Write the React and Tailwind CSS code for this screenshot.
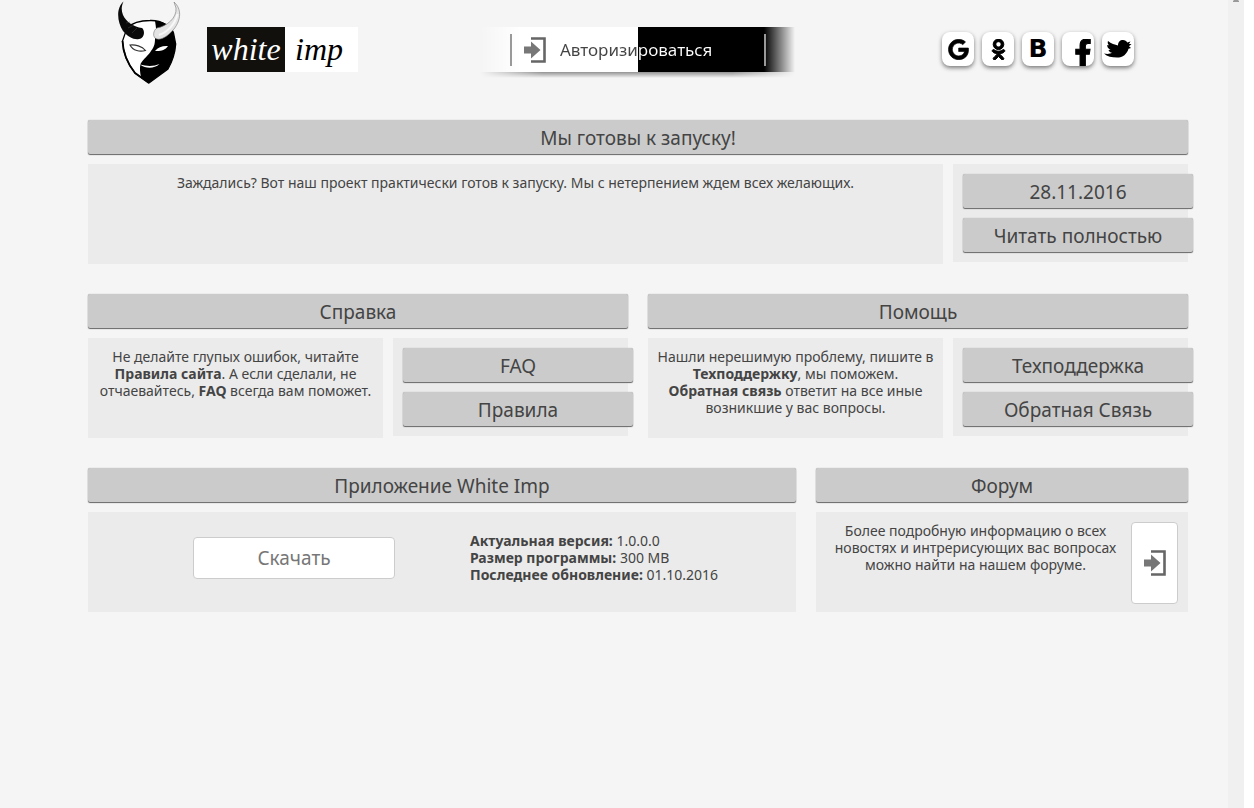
import { FaGoogle, FaOdnoklassniki, FaFacebookF } from "react-icons/fa";

function ImpMask() {
  return (
    <svg viewBox="0 0 64 84" className="h-[84px] w-16" role="img" aria-label="White Imp">
      <path d="M10 28 C16 22 25 20.500 33 20.500 C46 20 55 28 56.500 33 L58.700 44 C58 54 55 62 51 69 L32 83 L18 73 C10 63 6 52 5.500 41Z" fill="#fff" stroke="#000" strokeWidth="1.300" />
      <path d="M38 21 C49 21 55 28 56.500 33 L58.700 44 C58 54 55 62 51 69 L32 83 L24 77 C23 73 22.500 68 23.500 64 C26 59 32 55 34 51 C38 46 38 42 38 38 C40 33 39 27 38 21Z" fill="#000" />
      <path d="M5.500 41 C6 52 10 63 18 73 L32 83" fill="none" stroke="#000" strokeWidth="1.800" />
      <path d="M6.500 1.500 C-1 8 0 22 6 31 C11 37 17 40 22 39 C28 38 28 30 25 28 C17 27 9 22 6 15 C4 10 4.500 6 6.500 1.500Z" fill="#0a0a0a" />
      <path d="M9 23 L13 22 M11 28 L17 25 M15 33 L20 28" stroke="#444" strokeWidth="0.500" />
      <path d="M57 2 C65 9 64 20 57 29 C51 36 45 40 40 39 C35 38 36 30 40 28 C50 26 60 18 59 8Z" fill="#e4e4e4" stroke="#777" strokeWidth="0.600" />
      <path d="M42 35 C51 32 58 24 60.500 14" fill="none" stroke="#f8f8f8" strokeWidth="2" />
      <path d="M13 45 C18 44.500 25 46 28.500 50.500 C23 52 16 51 13 45Z" fill="#fff" stroke="#333" strokeWidth="1.100" />
      <path d="M38 51 C41 47 46 45.500 51 46 C48 50.500 43 51.500 38 51Z" fill="#fff" />
      <path d="M23 64.500 C30 66.500 37 66.500 42.500 64 C37 69 29 69 23 64.500Z" fill="#fff" />
    </svg>
  );
}

function EnterIcon() {
  return (
    <svg viewBox="0 0 22 26" className="h-[26px] w-[22px] shrink-0" aria-hidden="true">
      <path d="M7 1.500 H20.500 V24.500 H7" fill="none" stroke="#666" strokeWidth="2.600" />
      <path d="M0 9.500 H7 V4.500 L16.500 13 L7 21.500 V16.500 H0Z" fill="#777" />
    </svg>
  );
}

function BirdIcon() {
  return (
    <svg viewBox="0 0 28 18" className="h-[18px] w-7 shrink-0" aria-hidden="true">
      <path d="M0 13.500 C3 14.200 6 14 8 12.800 C6 12.500 5 11.500 4.500 10 L6.500 9.800 C4 8.500 3.200 7 3.200 5 L5 5.300 C3.500 4 3.500 2.500 4 1 C7 4 11 4.500 14 5.500 C14 2 16 0 19 0 C21 0 22.500 1 23.300 2.500 L26.500 1.500 L25 4 L27.500 4 L25 6.300 L27 8 L24.500 8.700 C23 14 19 17.500 13 17.500 C8 17.500 3 16.500 0 13.500Z" fill="#000" />
    </svg>
  );
}

const plate =
  "bg-[#cbcbcb] rounded-xs shadow-[0_1px_1px_#666,0_0_1px_#999] text-center text-[19px] leading-9 h-[34px] text-[#444]";

function Heading({ children }) {
  return <h2 className={`${plate} mb-[10px]`}>{children}</h2>;
}

function SideButtons({ labels }) {
  return (
    <div className="h-[98px] w-[235px] shrink-0 bg-[#ebebeb] pt-[10px] pl-[10px]">
      <div className="-mr-[5px] flex flex-col gap-[10px]">
        {labels.map((label) => (
          <button key={label} type="button" className={`${plate} w-full`}>
            {label}
          </button>
        ))}
      </div>
    </div>
  );
}

function TextPanel({ children }) {
  return <div className="min-h-[100px] flex-1 bg-[#ebebeb] px-1 pt-[10px] text-center">{children}</div>;
}

function Social({ label, children }) {
  return (
    <a href="#" aria-label={label} className="flex h-[34px] w-8 items-center justify-center overflow-hidden rounded-lg bg-white text-black shadow-[0_2px_4px_rgba(0,0,0,0.5)]">
      {children}
    </a>
  );
}

export default function App() {
  return (
    <div className="flex min-h-screen bg-[#f5f5f5] font-['Noto_Sans',sans-serif] text-[14px] leading-[17px] text-[#444]">
      <div className="flex-1 pr-10 pl-[88px]">
        <header className="flex h-[120px] items-start pr-[54px] pl-[29px]">
          <ImpMask />
          <a href="#" className="mt-[27px] ml-[26px] flex h-[45px] font-['Liberation_Serif',serif] text-[32px] leading-[44px] italic">
            <span className="w-[78px] bg-[#11100c] text-center text-white">white</span>
            <span className="w-[73px] bg-white pl-[10px] text-black">imp</span>
          </a>
          <div className="mt-[27px] ml-[122px] w-[315px]">
            <button type="button" className="flex h-[45px] w-full items-center bg-[linear-gradient(90deg,transparent_0,#fff_40px,#fff_158px,#000_158px,#000_284px,transparent_315px)] pl-[30px] text-[17px]">
              <span className="h-8 w-[2px] bg-[#999]" />
              <span className="ml-3">
                <EnterIcon />
              </span>
              <span className="ml-[14px] bg-[linear-gradient(90deg,#444_78px,#fff_78px)] bg-clip-text leading-6 text-transparent">Авторизироваться</span>
              <span className="mr-[29px] ml-auto h-8 w-[2px] bg-[#999]" />
            </button>
            <div className="h-[6px] bg-linear-to-b from-black/40 to-transparent [mask-image:linear-gradient(90deg,transparent,#000_20%,#000_80%,transparent)]" />
          </div>
          <nav className="mt-8 ml-auto flex gap-2" aria-label="Социальные сети">
            <Social label="Google"><FaGoogle size={21} className="stroke-black stroke-[16]" /></Social>
            <Social label="Одноклассники"><FaOdnoklassniki size={21} className="stroke-black stroke-[24]" /></Social>
            <Social label="ВКонтакте"><span className="font-['DejaVu_Sans',sans-serif] text-[25px] leading-9 font-bold">B</span></Social>
            <Social label="Facebook"><FaFacebookF size={27} className="mt-[7px] ml-[10px] stroke-black stroke-[20]" /></Social>
            <Social label="Twitter"><BirdIcon /></Social>
          </nav>
        </header>

        <main className="flex flex-col gap-[30px]">
          <section>
            <Heading>Мы готовы к запуску!</Heading>
            <div className="flex items-start gap-[10px]">
              <TextPanel>Заждались? Вот наш проект практически готов к запуску. Мы с нетерпением ждем всех желающих.</TextPanel>
              <SideButtons labels={["28.11.2016", "Читать полностью"]} />
            </div>
          </section>

          <div className="grid grid-cols-2 gap-5">
            <section>
              <Heading>Справка</Heading>
              <div className="flex items-start gap-[10px]">
                <TextPanel>
                  Не делайте глупых ошибок, читайте<br />
                  <b>Правила сайта</b>. А если сделали, не<br />
                  отчаевайтесь, <b>FAQ</b> всегда вам поможет.
                </TextPanel>
                <SideButtons labels={["FAQ", "Правила"]} />
              </div>
            </section>
            <section>
              <Heading>Помощь</Heading>
              <div className="flex items-start gap-[10px]">
                <TextPanel>
                  Нашли нерешимую проблему, пишите в<br />
                  <b>Техподдержку</b>, мы поможем.<br />
                  <b>Обратная связь</b> ответит на все иные<br />
                  возникшие у вас вопросы.
                </TextPanel>
                <SideButtons labels={["Техподдержка", "Обратная Связь"]} />
              </div>
            </section>
          </div>

          <div className="grid grid-cols-[708fr_372fr] gap-5">
            <section>
              <Heading>Приложение White Imp</Heading>
              <div className="flex min-h-[100px] items-start bg-[#ebebeb] pl-[105px]">
                <button type="button" className="mt-[25px] h-[42px] w-[202px] rounded-sm border border-[#ccc] bg-white text-[19px] text-[#777]">Скачать</button>
                <div className="mt-5 ml-[75px]">
                  <p><b>Актуальная версия:</b> 1.0.0.0</p>
                  <p><b>Размер программы:</b> 300 MB</p>
                  <p><b>Последнее обновление:</b> 01.10.2016</p>
                </div>
              </div>
            </section>
            <section>
              <Heading>Форум</Heading>
              <div className="flex min-h-[100px] items-start bg-[#ebebeb] pt-[10px] pr-[10px] pl-1">
                <p className="flex-1 text-center">
                  Более подробную информацию о всех<br />
                  новостях и интрерисующих вас вопросах<br />
                  можно найти на нашем форуме.
                </p>
                <button type="button" aria-label="Форум" className="flex h-[82px] w-[47px] shrink-0 items-center justify-center rounded-sm border border-[#ccc] bg-white">
                  <EnterIcon />
                </button>
              </div>
            </section>
          </div>
        </main>
      </div>
      <div className="flex w-4 justify-center bg-[#f0f0f0]" aria-hidden="true">
        <svg viewBox="0 0 8 3" className="h-[3px] w-2"><path d="M1 2 V1 L2 0 H6 L7 1 V2Z" fill="#999" /></svg>
      </div>
      <div className="w-[10px] bg-white" />
    </div>
  );
}
